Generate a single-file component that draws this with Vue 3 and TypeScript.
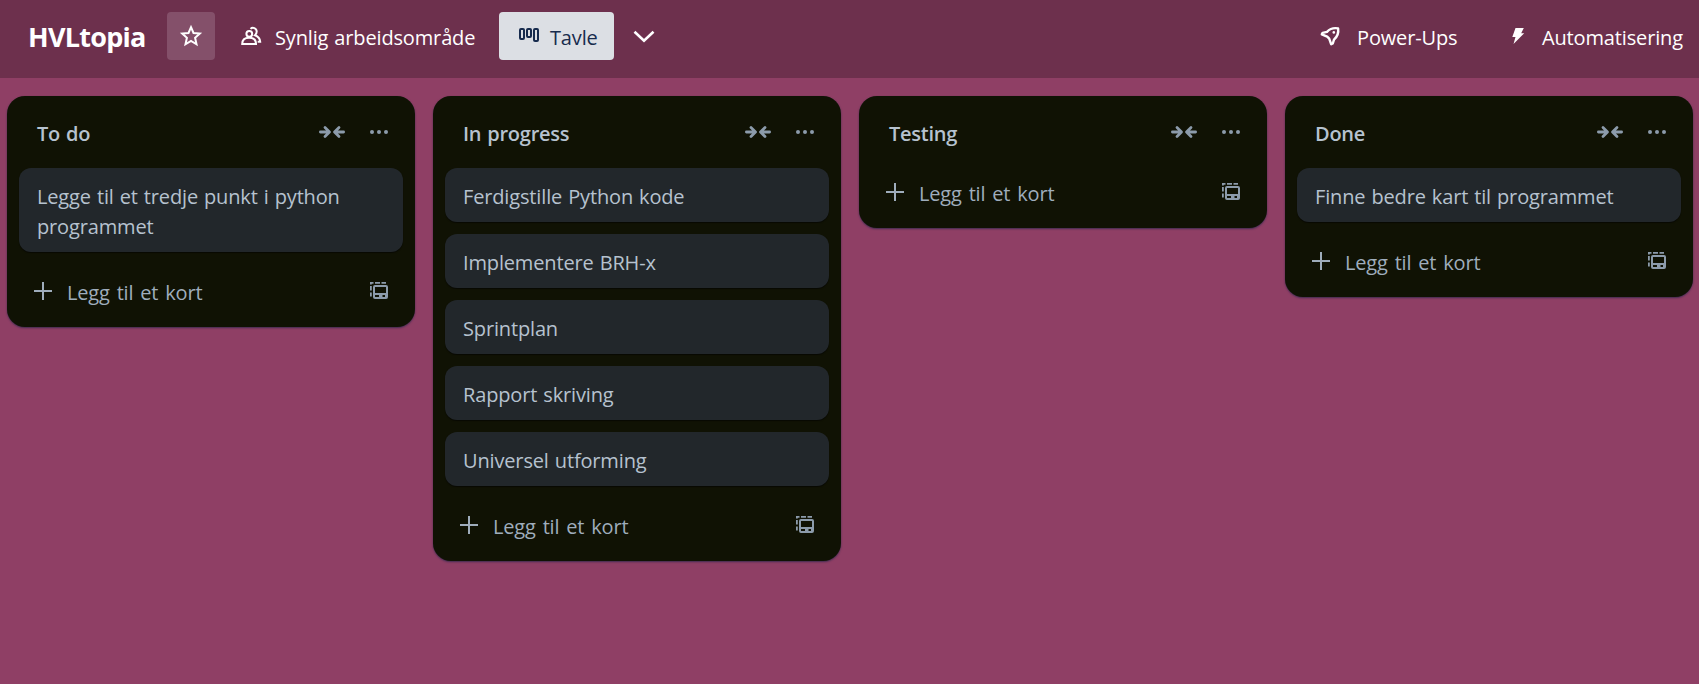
<script setup lang="ts">
interface BoardList {
  title: string
  cards: string[]
}

const lists: BoardList[] = [
  { title: 'To do', cards: ['Legge til et tredje punkt i python programmet'] },
  {
    title: 'In progress',
    cards: [
      'Ferdigstille Python kode',
      'Implementere BRH-x',
      'Sprintplan',
      'Rapport skriving',
      'Universel utforming',
    ],
  },
  { title: 'Testing', cards: [] },
  { title: 'Done', cards: ['Finne bedre kart til programmet'] },
]
</script>

<template>
  <div class="board">
    <header class="bar">
      <h1 class="name">HVLtopia</h1>
      <button class="star" aria-label="Stjerne">
        <svg class="icon" viewBox="0 0 24 24">
          <path class="line" d="M12 3.200 14.500 9l6.300.6-4.700 4.200 1.400 6.500-5.500-3.300-5.500 3.300 1.400-6.500L3.200 9.600 9.500 9Z" />
        </svg>
      </button>
      <button class="visibility">
        <svg class="icon" viewBox="0 0 24 24">
          <circle class="line" cx="10.300" cy="9.800" r="2.900" />
          <path class="line" d="M3.200 20c0-4.300 2.600-6.300 6.900-6.300s6.900 2 6.900 6.300Z" />
          <path class="line" d="M11.500 4.900c2-2 6.200-1 6.200 2.700 0 1.800-.7 2.800-1.700 3.700 3.200 1.200 5 3 5.200 6.500h-2.500" />
        </svg>
        <span>Synlig arbeidsområde</span>
      </button>
      <button class="view">
        <svg class="icon" viewBox="0 0 24 24">
          <rect class="line" x="3" y="5" width="4" height="10" rx="1" />
          <rect class="line" x="10" y="5" width="4" height="8" rx="1" />
          <rect class="line" x="17" y="5" width="4" height="12" rx="1" />
        </svg>
        <span>Tavle</span>
      </button>
      <svg class="icon chevron" viewBox="0 0 24 24">
        <path class="line" d="m2.500 7.800 9.500 9 9.500-9" />
      </svg>
      <button class="power">
        <svg class="icon rocket" viewBox="0 0 24 24">
          <path class="line" d="M9 7.800C12 4.700 16 3.600 20.100 4.400c.7 4.200-.6 8.100-4.100 11.300l-1.200 3.800-1.600.8-2-5.700-2-2-5.400-2.200.8-1.600Z" />
          <circle class="fill" cx="15.800" cy="8.400" r="1.300" />
        </svg>
        <span>Power-Ups</span>
      </button>
      <button class="automation">
        <svg class="icon" viewBox="0 0 24 24">
          <path class="fill" d="M9.500 4h8.300l-2.600 5.200h3L7.500 20l2-7H6.300Z" />
        </svg>
        <span>Automatisering</span>
      </button>
    </header>

    <main class="lists">
      <section v-for="list in lists" :key="list.title" class="list">
        <div class="head">
          <h2 class="title">{{ list.title }}</h2>
          <svg class="collapse" viewBox="0 0 30 24">
            <path class="thick" d="M3.400 12h8.600M8 7.500l4.500 4.500L8 16.500M26.600 12h-8.600M22 7.500 17.500 12l4.500 4.500" />
          </svg>
          <svg class="icon" viewBox="0 0 24 24">
            <circle class="fill" cx="5" cy="12" r="2" />
            <circle class="fill" cx="12" cy="12" r="2" />
            <circle class="fill" cx="19" cy="12" r="2" />
          </svg>
        </div>
        <div v-if="list.cards.length" class="cards">
          <article v-for="card in list.cards" :key="card" class="card">{{ card }}</article>
        </div>
        <div class="foot">
          <svg class="icon" viewBox="0 0 24 24">
            <path class="line" d="M12 3v18M3 12h18" />
          </svg>
          <span class="add">Legg til et kort</span>
          <svg class="icon" viewBox="0 0 24 24">
            <path class="thin" d="M3.900 5.500V3.900H6.500M8 3.900h5M14.500 3.900H19M3.900 7v4.500M3.900 13.500V17.500" />
            <rect class="line" x="7" y="7" width="13" height="12" rx="1" />
            <path class="fill" d="M7 14h13v2H7ZM12 15h3.500v4H12ZM18 15h2v4h-2Z" />
          </svg>
        </div>
      </section>
    </main>
  </div>
</template>

<style>
body {
  margin: 0;
}
</style>

<style scoped>
.board {
  width: 1699px;
  height: 684px;
  overflow: hidden;
  background: #8f3f65;
  font-family: 'Open Sans', 'Noto Sans', sans-serif;
  font-size: 20px;
  letter-spacing: -0.15px;
  word-spacing: 1px;
}
.bar {
  display: flex;
  align-items: center;
  box-sizing: border-box;
  height: 78px;
  padding: 0 0 6px 28px;
  background: #6d304d;
  color: #fff;
}
button {
  display: flex;
  align-items: center;
  flex: none;
  box-sizing: border-box;
  height: 48px;
  margin: 0;
  padding: 0;
  border: 0;
  border-radius: 4px;
  background: none;
  color: inherit;
  font: inherit;
  letter-spacing: inherit;
  word-spacing: inherit;
  line-height: 30px;
  white-space: nowrap;
}
button span {
  padding-top: 3px;
}
.icon {
  flex: none;
  width: 24px;
  height: 24px;
}
.line,
.thick,
.thin {
  fill: none;
  stroke: currentColor;
  stroke-width: 2;
}
.thick {
  stroke-width: 2.8;
  stroke-linecap: round;
  stroke-linejoin: round;
}
.thin {
  stroke-width: 1.8;
}
.fill {
  fill: currentColor;
}
.rocket .line {
  stroke-width: 2.4;
  stroke-linejoin: round;
}
.name {
  width: 139px;
  margin: 0;
  padding-top: 2px;
  font-size: 27px;
  font-weight: 700;
  line-height: 36px;
  letter-spacing: -0.75px;
}
.star {
  justify-content: center;
  width: 48px;
  background: #84506a;
}
.visibility {
  gap: 12px;
  width: 284px;
  padding-left: 24px;
}
.view {
  gap: 9px;
  width: 115px;
  padding-left: 18px;
  background: #dcdfe4;
  color: #172b4d;
}
.chevron {
  margin-left: 18px;
}
.chevron .line {
  stroke-width: 2.6;
}
.power {
  gap: 15px;
  width: 188px;
  margin-left: auto;
}
.automation {
  gap: 12px;
  width: 193px;
}
.lists {
  display: flex;
  align-items: flex-start;
  gap: 18px;
  padding: 18px 7px;
}
.list {
  flex: none;
  box-sizing: border-box;
  width: 408px;
  padding: 0 12px 12px;
  border-radius: 18px;
  background: #101204;
  box-shadow: 0 1px 2px rgba(9, 30, 66, 0.6);
}
.head {
  display: flex;
  align-items: center;
  height: 72px;
  padding-right: 12px;
  color: #8c9bab;
}
.title {
  flex: 1;
  margin: 4px 0 0 18px;
  color: #b6c2cf;
  font-size: 20px;
  font-weight: 600;
  line-height: 30px;
  letter-spacing: -0.25px;
}
.collapse {
  width: 30px;
  height: 24px;
  margin-right: 20.5px;
}
.cards {
  display: grid;
  gap: 12px;
  padding-bottom: 15px;
}
.card {
  padding: 14px 18px 10px;
  border-radius: 12px;
  background: #22272b;
  box-shadow: 0 1px 1px rgba(3, 4, 4, 0.6);
  color: #b6c2cf;
  line-height: 30px;
}
.foot {
  display: flex;
  align-items: center;
  height: 48px;
  padding: 0 12px;
  color: #9fadbc;
}
.foot .icon:last-child {
  color: #8c9bab;
}
.add {
  flex: 1;
  padding: 3px 0 0 12px;
  color: #9fadbc;
  line-height: 30px;
  word-spacing: 1.8px;
}
</style>
